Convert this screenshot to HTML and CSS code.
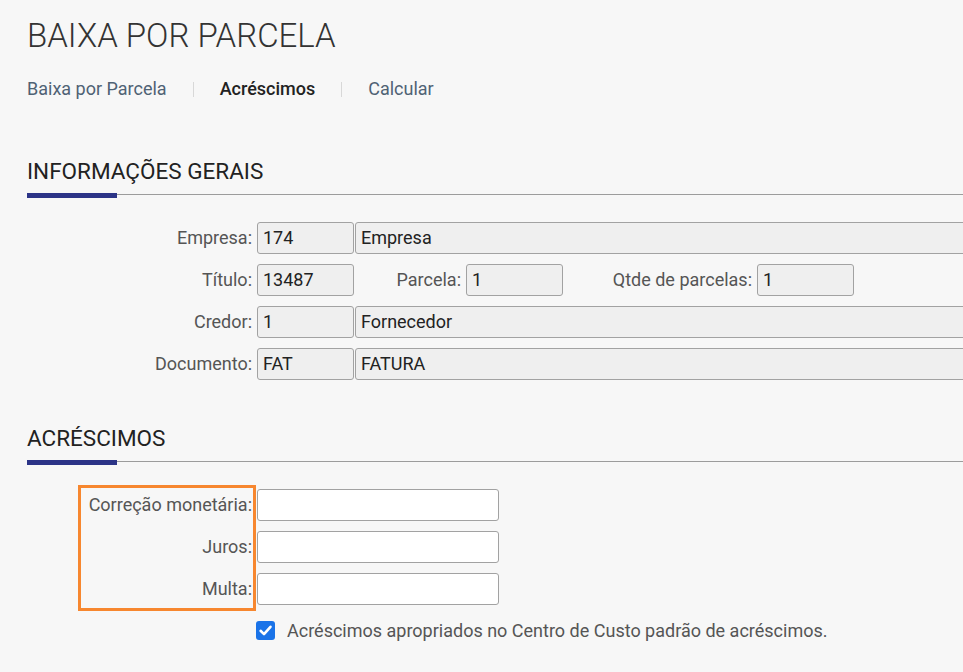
FILE: index.html
```html
<!DOCTYPE html>
<html lang="pt-BR">
<head>
<meta charset="utf-8">
<title>Baixa por Parcela</title>
<link rel="stylesheet" href="styles.css">
</head>
<body>
<div class="page">
  <h1 class="title">BAIXA POR PARCELA</h1>
  <nav class="tabs">
    <a class="tab">Baixa por Parcela</a>
    <span class="sep"></span>
    <a class="tab active">Acréscimos</a>
    <span class="sep"></span>
    <a class="tab">Calcular</a>
  </nav>

  <section class="section section-info">
    <h2 class="section-title">INFORMAÇÕES GERAIS</h2>
    <div class="rule"><span class="rule-bar"></span><span class="rule-line"></span></div>
    <div class="form">
      <div class="row">
        <span class="lbl lbl-main">Empresa:</span>
        <div class="field ro sm">174</div>
        <div class="field ro wide">Empresa</div>
      </div>
      <div class="row">
        <span class="lbl lbl-main">Título:</span>
        <div class="field ro sm">13487</div>
        <span class="lbl lbl-parcela">Parcela:</span>
        <div class="field ro sm">1</div>
        <span class="lbl lbl-qtde">Qtde de parcelas:</span>
        <div class="field ro sm">1</div>
      </div>
      <div class="row">
        <span class="lbl lbl-main">Credor:</span>
        <div class="field ro sm">1</div>
        <div class="field ro wide">Fornecedor</div>
      </div>
      <div class="row">
        <span class="lbl lbl-main">Documento:</span>
        <div class="field ro sm">FAT</div>
        <div class="field ro wide">FATURA</div>
      </div>
    </div>
  </section>

  <section class="section section-acr">
    <h2 class="section-title">ACRÉSCIMOS</h2>
    <div class="rule"><span class="rule-bar"></span><span class="rule-line"></span></div>
    <div class="form form-acr">
      <div class="row">
        <span class="lbl lbl-main">Correção monetária:</span>
        <div class="field md"></div>
      </div>
      <div class="row">
        <span class="lbl lbl-main">Juros:</span>
        <div class="field md"></div>
      </div>
      <div class="row">
        <span class="lbl lbl-main">Multa:</span>
        <div class="field md"></div>
      </div>
      <div class="highlight"></div>
    </div>
    <div class="check-row">
      <span class="check">
        <svg viewBox="0 0 19 19" width="19" height="19"><path d="M4.6 9.8 L8 13.1 L14.5 5.8" fill="none" stroke="#fff" stroke-width="2.6" stroke-linecap="round" stroke-linejoin="round"/></svg>
      </span>
      <span class="check-text">Acréscimos apropriados no Centro de Custo padrão de acréscimos.</span>
    </div>
  </section>
</div>
</body>
</html>
```

FILE: styles.css
```css
html, body {
  margin: 0;
  padding: 0;
  background: #f7f7f7;
  overflow: hidden;
}

body {
  font-family: Roboto, "Liberation Sans", sans-serif;
  color: #555;
  width: 963px;
  height: 672px;
}

.page {
  padding-left: 27px;
}

.title {
  margin: 16px 0 0;
  font-family: "Roboto Light", Roboto, "Liberation Sans", sans-serif;
  font-size: 33px;
  line-height: 40px;
  font-weight: 300;
  color: #333;
  white-space: nowrap;
}

.tabs {
  margin-top: 21px;
  display: flex;
  align-items: center;
  height: 24px;
  font-size: 18px;
  line-height: 24px;
}

.tab {
  color: #4f6274;
  text-decoration: none;
  white-space: nowrap;
}

.tab.active {
  color: #222;
  font-weight: 500;
}

.sep {
  width: 1px;
  height: 15px;
  background: #d8d8d8;
  margin: 0 26px;
}

.section-title {
  margin: 0;
  font-size: 22.5px;
  line-height: 28px;
  font-weight: 400;
  color: #222;
  white-space: nowrap;
}

.section-info {
  margin-top: 56px;
}

.section-acr {
  margin-top: 44px;
}

.rule {
  margin-top: 8px;
  display: flex;
  align-items: flex-start;
  height: 5px;
}

.rule-bar {
  width: 90px;
  height: 5px;
  background: #2c3487;
}

.rule-line {
  flex: 1;
  height: 1px;
  margin-top: 1px;
  background: #9c9c9c;
}

.form {
  margin-top: 24px;
  display: flex;
  flex-direction: column;
  gap: 10px;
}

.form-acr {
  position: relative;
}

.row {
  display: flex;
  height: 32px;
  align-items: stretch;
}

.lbl {
  box-sizing: border-box;
  flex: none;
  text-align: right;
  padding-right: 5px;
  font-size: 18px;
  line-height: 32px;
  color: #555;
  white-space: nowrap;
}

.lbl-main { width: 230px; }
.lbl-parcela { width: 112px; }
.lbl-qtde { width: 194px; }

.field {
  box-sizing: border-box;
  flex: none;
  height: 32px;
  border: 1px solid #a2a2a2;
  border-radius: 3px;
  padding: 0 5px;
  font-size: 18px;
  line-height: 30px;
  color: #222;
  background: #fff;
  white-space: nowrap;
  overflow: hidden;
}

.field.ro {
  background: #efefef;
}

.field.sm { width: 97px; }
.field.md { width: 242px; }
.field.wide {
  width: 640px;
  margin-left: 1px;
}

.highlight {
  position: absolute;
  left: 51px;
  top: -4px;
  width: 178px;
  height: 126px;
  box-sizing: border-box;
  border: 3px solid #f7872f;
  pointer-events: none;
}

.check-row {
  margin-top: 16px;
  margin-left: 229px;
  display: flex;
  align-items: center;
  height: 19px;
}

.check {
  width: 19px;
  height: 19px;
  border-radius: 3px;
  background: #1a73e8;
  display: flex;
}

.check-text {
  margin-left: 12px;
  font-size: 18px;
  line-height: 19px;
  color: #555;
  white-space: nowrap;
}
```
